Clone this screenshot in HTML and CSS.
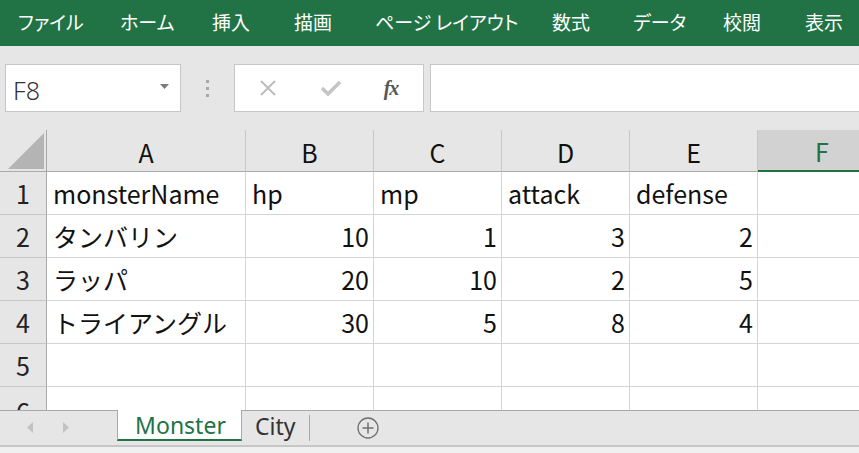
FILE: index.html
```html
<!DOCTYPE html>
<html lang="ja">
<head>
<meta charset="utf-8">
<title>Excel</title>
<link rel="stylesheet" href="styles.css">
</head>
<body>
<div class="app">
  <nav class="ribbon">
    <span class="tab">ファイル</span>
    <span class="tab">ホーム</span>
    <span class="tab">挿入</span>
    <span class="tab">描画</span>
    <span class="tab">ページ レイアウト</span>
    <span class="tab">数式</span>
    <span class="tab">データ</span>
    <span class="tab">校閲</span>
    <span class="tab">表示</span>
  </nav>

  <div class="toolbar">
    <div class="namebox">
      <span class="name">F8</span>
      <svg class="dropdown" width="9" height="5" viewBox="0 0 9 5"><path d="M0 0 H9 L4.5 5 Z" fill="#7a7a7a"/></svg>
    </div>
    <div class="grip"><i></i><i></i><i></i></div>
    <div class="fxbox">
      <svg class="ico" width="20" height="20" viewBox="0 0 20 20"><path d="M3 3 L17 17 M17 3 L3 17" stroke="#bcbcbc" stroke-width="2" fill="none"/></svg>
      <svg class="ico" width="22" height="20" viewBox="0 0 22 20"><path d="M2 10 L8 16 L20 4" stroke="#c4c4c4" stroke-width="3.4" fill="none"/></svg>
      <span class="fx">fx</span>
    </div>
    <div class="formula"></div>
  </div>

  <div class="sheet">
    <div class="corner"><svg width="36" height="36" viewBox="0 0 36 36"><path d="M0 36 H36 V0 Z" fill="#b4b4b4"/></svg></div>
    <div class="ch">A</div>
    <div class="ch">B</div>
    <div class="ch">C</div>
    <div class="ch">D</div>
    <div class="ch">E</div>
    <div class="ch sel">F</div>

    <div class="rh">1</div>
    <div class="c">monsterName</div>
    <div class="c">hp</div>
    <div class="c">mp</div>
    <div class="c">attack</div>
    <div class="c">defense</div>
    <div class="c"></div>

    <div class="rh">2</div>
    <div class="c">タンバリン</div>
    <div class="c n">10</div>
    <div class="c n">1</div>
    <div class="c n">3</div>
    <div class="c n">2</div>
    <div class="c"></div>

    <div class="rh">3</div>
    <div class="c">ラッパ</div>
    <div class="c n">20</div>
    <div class="c n">10</div>
    <div class="c n">2</div>
    <div class="c n">5</div>
    <div class="c"></div>

    <div class="rh">4</div>
    <div class="c">トライアングル</div>
    <div class="c n">30</div>
    <div class="c n">5</div>
    <div class="c n">8</div>
    <div class="c n">4</div>
    <div class="c"></div>

    <div class="rh">5</div>
    <div class="c"></div>
    <div class="c"></div>
    <div class="c"></div>
    <div class="c"></div>
    <div class="c"></div>
    <div class="c"></div>

    <div class="rh partial">6</div>
    <div class="c"></div>
    <div class="c"></div>
    <div class="c"></div>
    <div class="c"></div>
    <div class="c"></div>
    <div class="c"></div>
  </div>

  <div class="tabbar">
    <div class="nav">
      <svg width="6" height="11" viewBox="0 0 6 11"><path d="M6 0 V11 L0 5.5 Z" fill="#c2c2c2"/></svg>
      <svg width="6" height="11" viewBox="0 0 6 11"><path d="M0 0 V11 L6 5.5 Z" fill="#c2c2c2"/></svg>
    </div>
    <div class="sheettab active">Monster</div>
    <div class="sheettab">City</div>
    <div class="sep"></div>
    <div class="add">
      <svg width="22" height="22" viewBox="0 0 22 22"><circle cx="11" cy="11" r="10" stroke="#707070" stroke-width="1.3" fill="none"/><path d="M11 5.5 V16.5 M5.5 11 H16.5" stroke="#707070" stroke-width="1.5"/></svg>
    </div>
  </div>
  <div class="status"></div>
</div>
</body>
</html>
```

FILE: styles.css
```css
html, body {
  margin: 0;
  padding: 0;
}
body {
  width: 859px;
  height: 453px;
  overflow: hidden;
  background: #e6e6e6;
  font-family: "Noto Sans CJK JP", "Noto Sans", sans-serif;
}
.app {
  display: flex;
  flex-direction: column;
  width: 859px;
  height: 453px;
  overflow: hidden;
}

/* Ribbon */
.ribbon {
  height: 46px;
  flex: none;
  background: #217346;
  color: #ffffff;
  display: grid;
  grid-template-columns: 102px 92px 82px 81px 177px 81px 90px 82px 1fr;
  padding-left: 18px;
  align-items: center;
  font-size: 19px;
  font-feature-settings: "palt";
  white-space: nowrap;
  box-sizing: border-box;
  padding-bottom: 4px;
}

/* Toolbar */
.toolbar {
  height: 84px;
  flex: none;
  display: flex;
  align-items: flex-start;
  padding: 18px 0 0 5px;
  box-sizing: border-box;
  background: #e6e6e6;
}
.namebox {
  width: 176px;
  height: 48px;
  box-sizing: border-box;
  border: 1px solid #c6c6c6;
  background: #ffffff;
  display: flex;
  align-items: center;
  justify-content: space-between;
  padding: 0 11px 0 7px;
}
.name {
  font-family: "Noto Sans", sans-serif;
  font-size: 25px;
  font-weight: 300;
  color: #333333;
  padding-top: 4px;
}
.dropdown {
  margin-top: -3px;
}
.grip {
  width: 53px;
  height: 48px;
  display: flex;
  flex-direction: column;
  align-items: center;
  justify-content: center;
  gap: 4px;
}
.grip i {
  width: 3px;
  height: 3px;
  background: #a8a8a8;
}
.fxbox {
  width: 190px;
  height: 48px;
  box-sizing: border-box;
  border: 1px solid #c6c6c6;
  background: #ffffff;
  display: grid;
  grid-template-columns: 64px 64px 1fr;
  align-items: center;
  justify-items: center;
}
.fxbox .ico:first-child {
  margin-left: 1px;
}
.fx {
  font-family: "Liberation Serif", serif;
  font-style: italic;
  font-weight: bold;
  font-size: 20px;
  color: #555555;
  letter-spacing: -1px;
  margin-right: 4px;
}
.formula {
  flex: 1;
  margin-left: 6px;
  margin-right: -2px;
  height: 48px;
  box-sizing: border-box;
  border: 1px solid #c6c6c6;
  background: #ffffff;
}

/* Sheet */
.sheet {
  height: 280px;
  width: 859px;
  flex: none;
  overflow: hidden;
  display: grid;
  grid-template-columns: 47px 199px 128px 128px 128px 128px 128px;
  grid-template-rows: 42px repeat(6, 43px);
  background: #ffffff;
  font-size: 25px;
  color: #111111;
}
.corner {
  background: #e6e6e6;
  border-right: 1px solid #a9a9a9;
  border-bottom: 1px solid #a9a9a9;
  display: flex;
  align-items: flex-end;
  justify-content: flex-end;
  padding: 0 2px 2px 0;
  box-sizing: border-box;
}
.ch {
  background: #e6e6e6;
  border-right: 1px solid #c6c6c6;
  border-bottom: 1px solid #a9a9a9;
  display: flex;
  align-items: center;
  justify-content: center;
  box-sizing: border-box;
  padding-top: 2px;
}
.ch.sel {
  background: #d2d2d2;
  color: #217346;
  border-bottom: 2px solid #217346;
  border-right: none;
}
.rh {
  background: #e6e6e6;
  border-right: 1px solid #a9a9a9;
  border-bottom: 1px solid #c6c6c6;
  display: flex;
  align-items: center;
  justify-content: center;
  box-sizing: border-box;
  color: #222222;
}
.rh.partial {
  align-items: flex-start;
  padding-top: 6px;
}
.c {
  border-right: 1px solid #d4d4d4;
  border-bottom: 1px solid #d4d4d4;
  box-sizing: border-box;
  display: flex;
  align-items: center;
  padding: 0 4px 0 6px;
  white-space: nowrap;
  overflow: hidden;
}
.c.n {
  justify-content: flex-end;
}

/* Tab bar */
.tabbar {
  height: 35px;
  flex: none;
  box-sizing: border-box;
  border-top: 1px solid #a9a9a9;
  background: #e6e6e6;
  display: flex;
  align-items: stretch;
}
.nav {
  width: 117px;
  display: flex;
  align-items: center;
  padding-left: 27px;
  gap: 30px;
  box-sizing: border-box;
  padding-bottom: 2px;
}
.sheettab {
  font-size: 23px;
  display: flex;
  align-items: center;
  box-sizing: border-box;
  color: #333333;
  font-family: "Noto Sans", sans-serif;
}
.sheettab.active {
  width: 125px;
  margin-top: -1px;
  margin-bottom: 4px;
  background: #ffffff;
  border-left: 1px solid #a9a9a9;
  border-right: 1px solid #a9a9a9;
  border-bottom: 2px solid #217346;
  color: #217346;
  justify-content: center;
  padding-left: 2px;
}
.sheettab:not(.active) {
  padding: 0 13px 4px 13px;
}
.sep {
  width: 1px;
  background: #a9a9a9;
  margin: 4px 0 4px 0;
}
.add {
  display: flex;
  align-items: center;
  padding-left: 47px;
  padding-bottom: 1px;
}
.status {
  flex: 1;
  border-top: 2px solid #c6c6c6;
  background: #f0f0f0;
}
```
